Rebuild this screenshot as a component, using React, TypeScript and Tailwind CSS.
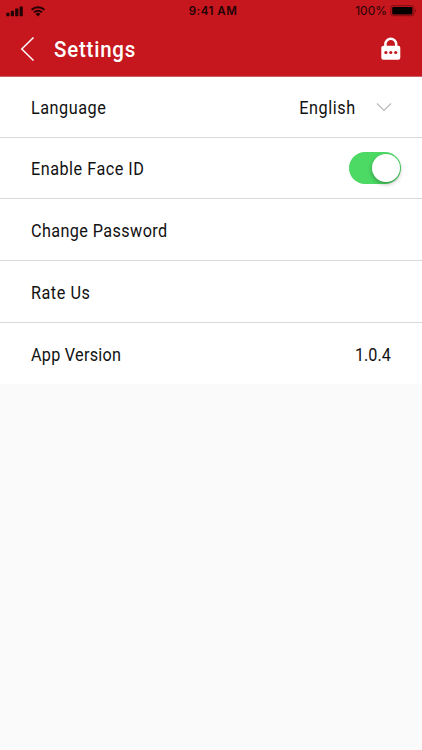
import { useState } from 'react';
import type { ReactNode } from 'react';

function StatusBar() {
  return (
    <div className="grid h-[22px] grid-cols-3 items-center leading-[22px] text-[#240305]">
      <div className="flex h-[22px] items-center pl-[6px]">
        <svg className="h-[11px] w-[40px]" viewBox="0 0 40 11" fill="currentColor">
          <rect x="0.3" y="6.8" width="3.2" height="3.4" rx="0.7" />
          <rect x="4.8" y="4.7" width="3.2" height="5.5" rx="0.7" />
          <rect x="9.2" y="2.6" width="3.2" height="7.6" rx="0.7" />
          <rect x="13.6" y="0.4" width="3.2" height="9.8" rx="0.7" />
          <path d="M32 10.400 34.400 8A3.500 3.500 0 0 0 29.600 8Z" />
          <g fill="none" stroke="currentColor" strokeWidth="2">
            <path d="M28 6.400A5.800 5.800 0 0 1 36 6.400" />
            <path d="M25.600 3.800A9.300 9.300 0 0 1 38.400 3.800" />
          </g>
        </svg>
      </div>
      <div className="pl-[4px] text-center text-[11.5px] font-semibold tracking-[0.5px]">9:41 AM</div>
      <div className="flex items-center justify-end pr-[5px]">
        <span className="mr-[3px] text-[12px]">100%</span>
        <svg className="h-[12px] w-[27px]" viewBox="0 0 27 12">
          <rect x="0.8" y="0.7" width="23" height="10" rx="2" fill="none" stroke="#7d0d13" />
          <rect x="2.200" y="2" width="20.200" height="7.400" rx="1" fill="#050000" />
          <path d="M25 4v3.400c1.400-.5 1.400-2.900 0-3.400Z" fill="#7d0d13" />
        </svg>
      </div>
    </div>
  );
}

function Header() {
  return (
    <header className="h-[77px] border-b border-[#cc6066] bg-[#c5171d] font-['Inter',sans-serif]">
      <StatusBar />
      <div className="flex h-[54px] items-center pr-[21px] pl-[20px] text-white">
        <button aria-label="Back">
          <svg className="h-[26px] w-[15px]" viewBox="0 0 15 26" fill="none" stroke="currentColor" strokeWidth="1.500">
            <path d="M13.500 1.500 1.800 13 13.500 24.500" />
          </svg>
        </button>
        <h1 className="ml-[19px] origin-left scale-x-[0.93] pt-[1px] font-['Roboto',sans-serif] text-[22px] leading-[26px] font-medium tracking-[0.85px]">
          Settings
        </h1>
        <svg className="ml-auto h-[24px] w-[20px]" viewBox="0 0 20 24">
          <path d="M4.400 11V7.200a5.400 5.400 0 0 1 10.800 0V11" fill="none" stroke="white" strokeWidth="2.500" />
          <rect x="0.300" y="8.800" width="19" height="14" rx="2" fill="white" />
          <g fill="#c5171d">
            <circle cx="4.900" cy="15.500" r="1.600" />
            <circle cx="9.800" cy="15.500" r="1.600" />
            <circle cx="14.700" cy="15.500" r="1.600" />
          </g>
        </svg>
      </div>
    </header>
  );
}

type RowProps = { label: string; className: string; labelClass: string; children?: ReactNode };

function Row({ label, className, labelClass, children }: RowProps) {
  return (
    <div className={`flex items-center border-[#d9d9d9] bg-white pl-[31px] ${className}`}>
      <span className={`origin-left scale-x-90 ${labelClass}`}>{label}</span>
      <div className="ml-auto flex items-center">{children}</div>
    </div>
  );
}

export default function App() {
  const [faceId, setFaceId] = useState(true);
  return (
    <div className="h-[750px] w-[422px] overflow-hidden bg-[#fafafa] font-['Roboto',sans-serif] text-[18px] leading-[24px] text-[#111]">
      <Header />
      <main>
        <Row label="Language" className="h-[61px] border-b pr-[30px]" labelClass="pt-[1px] tracking-[0.6px]">
          <span className="origin-right scale-x-90 pt-[1px] tracking-[0.65px]">English</span>
          <svg className="ml-[20px] h-[9px] w-[16px]" viewBox="0 0 16 9" fill="none" stroke="#b8b8b8" strokeWidth="1.100">
            <path d="M1 0.500 8 7.500 15 0.500" />
          </svg>
        </Row>
        <Row label="Enable Face ID" className="h-[61px] border-b pr-[21px]" labelClass="pt-[2px] tracking-[0.57px]">
          <button
            role="switch"
            aria-label="Enable Face ID"
            aria-checked={faceId}
            onClick={() => setFaceId(!faceId)}
            className={`flex h-[32px] w-[52px] items-center rounded-full px-[1.5px] ${faceId ? 'justify-end bg-[#4cd964]' : 'bg-[#ddd]'}`}
          >
            <span className="size-[28px] rounded-full bg-white shadow-[0_2px_4px_rgba(0,0,0,0.3)]" />
          </button>
        </Row>
        <Row label="Change Password" className="h-[62px] border-b" labelClass="pt-[2px] tracking-[0.45px]" />
        <Row label="Rate Us" className="h-[62px] border-b" labelClass="pt-[2px] tracking-[0.6px]" />
        <Row label="App Version" className="h-[61px] pr-[31px]" labelClass="pt-[2px] tracking-[0.3px]">
          <span className="origin-right scale-x-90 pt-[2px]">1.0.4</span>
        </Row>
      </main>
    </div>
  );
}
